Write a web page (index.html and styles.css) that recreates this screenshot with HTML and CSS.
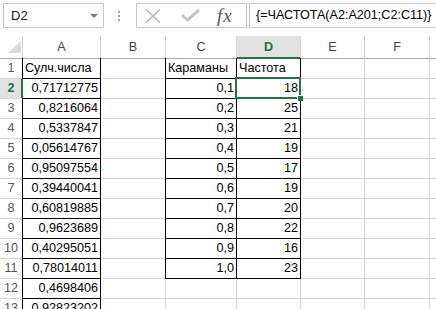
FILE: index.html
```html
<!DOCTYPE html>
<html lang="ru">
<head>
<meta charset="UTF-8">
<title>ЧАСТОТА</title>
<link rel="stylesheet" href="styles.css">
</head>
<body>
    <div class="bar">
        <div class="namebox"><span>D2</span><span class="drop"></span></div>
        <div class="grip"><i></i><i></i><i></i></div>
        <div class="btns">
            <svg class="ico-x" width="16" height="14" viewBox="0 0 16 14"><path d="M1 0.5 L15 13.5 M15 0.5 L1 13.5" stroke="#b8b8b8" stroke-width="1.6" fill="none"/></svg>
            <svg class="ico-ok" width="19" height="13" viewBox="0 0 19 13"><path d="M1 6 L6.5 11 L18 1" stroke="#c4c4c4" stroke-width="3" fill="none"/></svg>
            <span class="fx">fx</span>
        </div>
        <div class="formula">{=ЧАСТОТА(A2:A201;C2:C11)}</div>
    </div>

    <div class="sheet">
        <!-- column headers -->
        <div class="hd corner"><svg width="22" height="21" viewBox="0 0 22 21"><polygon points="21,5 21,17 8,17" fill="#dadada"/></svg></div>
        <div class="hd">A</div>
        <div class="hd">B</div>
        <div class="hd">C</div>
        <div class="hd on">D</div>
        <div class="hd">E</div>
        <div class="hd">F</div>
        <div class="hd"></div>

        <div class="rh">1</div>
        <div class="bx">Сулч.числа</div>
        <div></div>
        <div class="bx">Караманы</div>
        <div class="bx">Частота</div>
        <div></div><div></div><div></div>

        <div class="rh on">2</div>
        <div class="bx num">0,71712775</div>
        <div></div>
        <div class="bx num">0,1</div>
        <div class="bx num sel">18</div>
        <div></div><div></div><div></div>

        <div class="rh">3</div>
        <div class="bx num">0,8216064</div>
        <div></div>
        <div class="bx num">0,2</div>
        <div class="bx num">25</div>
        <div></div><div></div><div></div>

        <div class="rh">4</div>
        <div class="bx num">0,5337847</div>
        <div></div>
        <div class="bx num">0,3</div>
        <div class="bx num">21</div>
        <div></div><div></div><div></div>

        <div class="rh">5</div>
        <div class="bx num">0,05614767</div>
        <div></div>
        <div class="bx num">0,4</div>
        <div class="bx num">19</div>
        <div></div><div></div><div></div>

        <div class="rh">6</div>
        <div class="bx num">0,95097554</div>
        <div></div>
        <div class="bx num">0,5</div>
        <div class="bx num">17</div>
        <div></div><div></div><div></div>

        <div class="rh">7</div>
        <div class="bx num">0,39440041</div>
        <div></div>
        <div class="bx num">0,6</div>
        <div class="bx num">19</div>
        <div></div><div></div><div></div>

        <div class="rh">8</div>
        <div class="bx num">0,60819885</div>
        <div></div>
        <div class="bx num">0,7</div>
        <div class="bx num">20</div>
        <div></div><div></div><div></div>

        <div class="rh">9</div>
        <div class="bx num">0,9623689</div>
        <div></div>
        <div class="bx num">0,8</div>
        <div class="bx num">22</div>
        <div></div><div></div><div></div>

        <div class="rh">10</div>
        <div class="bx num">0,40295051</div>
        <div></div>
        <div class="bx num">0,9</div>
        <div class="bx num">16</div>
        <div></div><div></div><div></div>

        <div class="rh">11</div>
        <div class="bx num">0,78014011</div>
        <div></div>
        <div class="bx num">1,0</div>
        <div class="bx num">23</div>
        <div></div><div></div><div></div>

        <div class="rh">12</div>
        <div class="bx num">0,4698406</div>
        <div></div><div></div><div></div>
        <div></div><div></div><div></div>

        <div class="rh">13</div>
        <div class="bx num">0,92823202</div>
        <div></div><div></div><div></div>
        <div></div><div></div><div></div>
    </div>
</body>
</html>
```

FILE: styles.css
```css
body {
    margin: 0;
    height: 309px;
    overflow: hidden;
    background: #fff;
    font-family: "Liberation Sans", Arial, sans-serif;
    color: #000;
}

/* formula bar */
.bar {
    display: flex;
    align-items: flex-start;
    height: 36px;
    padding: 3px 0 0 3px;
    box-sizing: border-box;
}
.namebox {
    width: 101px;
    height: 25px;
    box-sizing: border-box;
    border: 1px solid #c6c6c6;
    display: flex;
    align-items: center;
    justify-content: space-between;
    padding: 0 5px 0 7px;
    font-size: 13px;
    color: #222;
}
.drop {
    width: 0;
    height: 0;
    border-left: 4px solid transparent;
    border-right: 4px solid transparent;
    border-top: 4px solid #7c7c7c;
}
.grip {
    height: 25px;
    margin-left: 14px;
    display: flex;
    flex-direction: column;
    justify-content: center;
    gap: 2px;
}
.grip i {
    width: 2px;
    height: 2px;
    background: #a6a6a6;
}
.btns {
    width: 111px;
    height: 25px;
    margin-left: 16px;
    box-sizing: border-box;
    border: 1px solid #c6c6c6;
    display: flex;
    align-items: center;
    padding-left: 8px;
}
.ico-ok {
    margin-left: 20px;
}
.fx {
    margin-left: 17px;
    font-family: "Liberation Serif", "Times New Roman", serif;
    font-style: italic;
    font-size: 19px;
    letter-spacing: 1px;
    color: #555;
    line-height: 23px;
}
.formula {
    flex: 1;
    height: 25px;
    margin-left: 2px;
    box-sizing: border-box;
    border: 1px solid #c6c6c6;
    border-right: none;
    padding-left: 6px;
    font-size: 12.6px;
    line-height: 23px;
    white-space: nowrap;
}

/* sheet grid */
.sheet {
    display: grid;
    grid-template-columns: 22px 77px 64px 70px 63px 63px 64px 1fr;
    grid-template-rows: 22px;
    grid-auto-rows: 19px;
    gap: 1px;
    background: #d4d4d4;
    font-size: 12.6px;
}
.sheet > div {
    background: #fff;
    line-height: 19px;
    padding: 0 2px;
    white-space: nowrap;
}
.sheet > .hd {
    position: relative;
    z-index: 1;
    line-height: 22px;
    text-align: center;
    color: #444;
    box-shadow: 0 1px 0 #ababab;
}
.sheet > .corner {
    padding: 0;
}
.corner svg {
    display: block;
}
.sheet > .rh {
    padding: 0;
    text-align: center;
    color: #555;
}
.sheet > .hd.on {
    z-index: 2;
    background: #e1e1e1;
    color: #217346;
    font-weight: bold;
    box-shadow: 0 1px 0 #217346, inset 0 -1px 0 #217346;
}
.sheet > .rh.on {
    position: relative;
    z-index: 2;
    background: #e1e1e1;
    color: #217346;
    font-weight: bold;
    box-shadow: 1px 0 0 #217346, inset -1px 0 0 #217346;
}
.num {
    text-align: right;
}
.bx {
    box-shadow: 0 0 0 1px #000;
}

/* active cell */
.sel {
    position: relative;
    z-index: 3;
}
.sel::before {
    content: "";
    position: absolute;
    top: -2px;
    left: -2px;
    right: -1px;
    bottom: -1px;
    border: 2px solid #217346;
}
.sel::after {
    content: "";
    position: absolute;
    right: -3px;
    bottom: -3px;
    width: 5px;
    height: 5px;
    background: #217346;
    border-left: 1px solid #fff;
    border-top: 1px solid #fff;
}
```
